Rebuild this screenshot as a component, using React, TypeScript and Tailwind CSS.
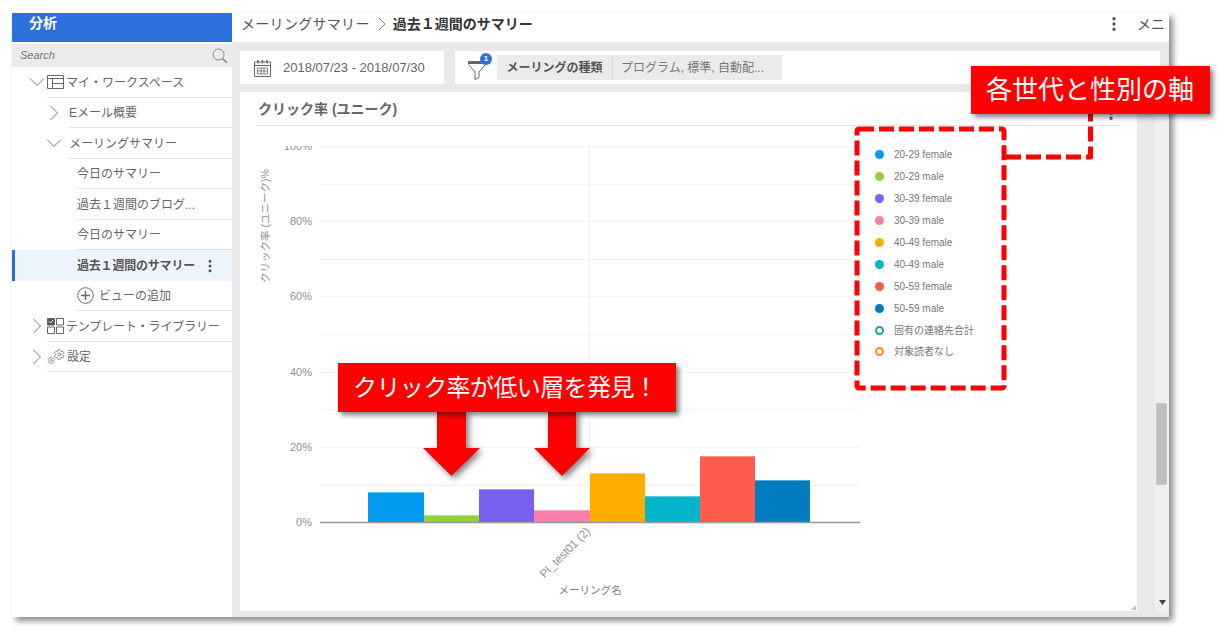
import { MoreVertical, Settings } from 'lucide-react'
import type { ReactNode } from 'react'

const bars = [
  { x: 368, w: 56, top: 492, color: '#009bf0' },
  { x: 424, w: 55, top: 515, color: '#95cf3e' },
  { x: 479, w: 55, top: 489, color: '#7a60ef' },
  { x: 534, w: 56, top: 510, color: '#fb7dab' },
  { x: 590, w: 55, top: 473, color: '#ffae00' },
  { x: 645, w: 55, top: 496, color: '#00b5cc' },
  { x: 700, w: 55, top: 456, color: '#ff5b4d' },
  { x: 755, w: 55, top: 480, color: '#007bbf' },
]

const legend = [
  { label: '20-29 female', color: '#009bf0' },
  { label: '20-29 male', color: '#95cf3e' },
  { label: '30-39 female', color: '#7a60ef' },
  { label: '30-39 male', color: '#fb7dab' },
  { label: '40-49 female', color: '#ffae00' },
  { label: '40-49 male', color: '#00b5cc' },
  { label: '50-59 female', color: '#ff5b4d' },
  { label: '50-59 male', color: '#007bbf' },
  { label: '固有の連絡先合計', color: '#14a88e', ring: true },
  { label: '対象読者なし', color: '#ff8c1a', ring: true },
]

const yTicks = [
  { label: '100%', y: 146 },
  { label: '80%', y: 221 },
  { label: '60%', y: 296 },
  { label: '40%', y: 372 },
  { label: '20%', y: 447 },
  { label: '0%', y: 522 },
]

const gridLines = [146, 184, 221, 259, 296, 334, 372, 409, 447, 485]

function Chevron({ open }: { open: boolean }) {
  return (
    <svg width="16" height="16" viewBox="0 0 16 16" fill="none" stroke="#777" strokeWidth="1">
      {open ? <path d="M1 4.5 L8 11.5 L15 4.5" /> : <path d="M4.5 1 L11.5 8 L4.5 15" />}
    </svg>
  )
}

function LayoutIcon() {
  return (
    <svg width="17" height="14" viewBox="0 0 17 14" fill="none" stroke="#666" strokeWidth="1" className="mb-[2px] shrink-0">
      <path d="M0.5 0.5 H16.5 V13.5 H0.5 Z M0.5 3.5 H16.5 M5.5 3.5 V13.5 M5.5 8.5 H16.5" />
    </svg>
  )
}

function TemplateIcon() {
  return (
    <svg width="17" height="16" viewBox="0 0 17 16" fill="none" stroke="#666" strokeWidth="1" className="mb-[2px] shrink-0">
      <path d="M0.5 0.5 H7.5 V7 H0.5 Z" fill="#555" />
      <path d="M2 3.5 L3.5 5 L6 2" stroke="#fff" />
      <path d="M9.5 0.5 H16.5 V7 H9.5 Z M0.5 9 H7.5 V15.5 H0.5 Z M9.5 9 H16.5 V15.5 H9.5 Z" />
    </svg>
  )
}

function GearIcon() {
  return (
    <span className="mb-[2px] flex w-[18px] shrink-0 items-start text-[#666]">
      <Settings size={9} strokeWidth={1.6} className="mt-[8px]" />
      <Settings size={13} strokeWidth={1.4} className="-ml-[3px]" />
    </span>
  )
}

function TreeRow({ pad, chevron, open, children }: { pad: string; chevron?: string; open?: boolean; children: ReactNode }) {
  return (
    <div className={`flex h-[30.5px] items-stretch ${pad}`}>
      {chevron && (
        <div className={`flex items-center ${chevron}`}>
          <Chevron open={!!open} />
        </div>
      )}
      <div className="flex min-w-0 flex-1 items-center gap-[2px] border-b border-[#e2e2e2] pt-[2px] text-[12px] whitespace-nowrap text-[#666]">
        {children}
      </div>
    </div>
  )
}

function Sidebar() {
  return (
    <aside className="flex w-[220px] shrink-0 flex-col bg-white">
      <div className="flex h-[29px] items-center bg-[#2b70dc] pb-[8px] pl-[17px] text-[14px] font-bold text-white">分析</div>
      <div className="mt-[2px] flex h-[23px] items-center justify-between bg-[#ebebeb] pr-[4px] pl-[8px]">
        <span className="text-[11px] text-[#777] italic">Search</span>
        <svg width="16" height="16" viewBox="0 0 16 16" fill="none" stroke="#888" strokeWidth="1">
          <circle cx="6.5" cy="6.5" r="5.5" />
          <path d="M10.5 10.5 L15 15" strokeWidth="1.6" />
        </svg>
      </div>
      <TreeRow pad="pl-[17px]" chevron="w-[18px]" open>
        <LayoutIcon />
        マイ・ワークスペース
      </TreeRow>
      <TreeRow pad="pl-[34px]" chevron="w-[23px]">
        Eメール概要
      </TreeRow>
      <TreeRow pad="pl-[34px]" chevron="w-[23px]" open>
        メーリングサマリー
      </TreeRow>
      <TreeRow pad="pl-[65px]">今日のサマリー</TreeRow>
      <TreeRow pad="pl-[65px]">過去１週間のブログ...</TreeRow>
      <TreeRow pad="pl-[65px]">今日のサマリー</TreeRow>
      <div className="flex h-[30.5px] items-center border-l-[3px] border-[#2b70dc] bg-[#edf4fd] pt-[1px] pl-[62px] text-[12px] font-bold tracking-[-0.2px] text-[#555]">
        過去１週間のサマリー
        <MoreVertical size={16} strokeWidth={2.5} className="ml-[7px] text-[#555]" />
      </div>
      <TreeRow pad="pl-[65px]">
        <svg width="17" height="17" viewBox="0 0 17 17" fill="none" stroke="#666" strokeWidth="1" className="mr-[3px] mb-[2px] shrink-0">
          <circle cx="8.5" cy="8.5" r="7.8" />
          <path d="M8.5 4 V13 M4 8.5 H13" strokeWidth="1.4" />
        </svg>
        ビューの追加
      </TreeRow>
      <TreeRow pad="pl-[17px]" chevron="w-[18px]">
        <TemplateIcon />
        <span className="tracking-[-0.15px]">テンプレート・ライブラリー</span>
      </TreeRow>
      <TreeRow pad="pl-[17px]" chevron="w-[18px]">
        <GearIcon />
        設定
      </TreeRow>
    </aside>
  )
}

function FilterBar() {
  return (
    <div className="flex h-[33px] gap-[11px] pr-[9px] pl-[8px]">
      <div className="flex w-[204px] items-center bg-white pl-[14px] text-[13px] text-[#666]">
        <svg width="17" height="18" viewBox="0 0 17 18" fill="none" stroke="#666" strokeWidth="1" className="mr-[12px]">
          <path d="M0.5 3 H16.5 V17.5 H0.5 Z M0.5 6.5 H16.5" />
          <path d="M4 1 V4.5 M8.5 1 V4.5 M13 1 V4.5" strokeWidth="1.4" />
          <path d="M3.5 9 H13.5 V15 H3.5 Z M3.5 12 H13.5 M7 9 V15 M10 9 V15" strokeWidth="0.8" />
        </svg>
        2018/07/23 - 2018/07/30
      </div>
      <div className="flex flex-1 items-center bg-white pl-[13px]">
        <div className="relative mr-[11px] h-[25px] w-[18px]">
          <svg width="18" height="19" viewBox="0 0 18 19" fill="none" stroke="#666" strokeWidth="1" className="absolute top-[6px] left-0">
            <path d="M0.5 3.5 L7 11 V18.5 L11 16.5 V11 L17.5 3.5" />
            <path d="M0 1.5 H18" strokeWidth="3" />
          </svg>
          <span className="absolute top-[-2px] left-[12px] flex h-[12px] w-[12px] items-center justify-center rounded-full bg-[#2b70dc] text-[8px] font-bold text-white">
            1
          </span>
        </div>
        <div className="flex h-[25px] items-center bg-[#ebebeb] text-[12px]">
          <span className="flex h-full w-[116px] items-center justify-center border-r border-[#dcdcdc] font-bold text-[#555]">
            メーリングの種類
          </span>
          <span className="flex h-full w-[169px] items-center pl-[8px] text-[#777]">プログラム, 標準, 自動配...</span>
        </div>
      </div>
    </div>
  )
}

function Chart() {
  return (
    <svg width="603" height="465" viewBox="257 146 603 465" className="shrink-0">
      {gridLines.map((y) => (
        <line key={y} x1="320" x2="860" y1={y + 0.5} y2={y + 0.5} stroke="#f3f3f3" />
      ))}
      <line x1="589.5" x2="589.5" y1="146" y2="522" stroke="#efefef" />
      {yTicks.map((t) => (
        <text key={t.label} x="312" y={t.y + 4} textAnchor="end" fontSize="11" fill="#8f8f8f">
          {t.label}
        </text>
      ))}
      <text x="269" y="226" transform="rotate(-90 269 226)" textAnchor="middle" fontSize="10.5" fill="#8f8f8f">
        クリック率 (ユニーク)%
      </text>
      {bars.map((b) => (
        <g key={b.x}>
          <rect x={b.x} y={b.top} width={b.w} height={522 - b.top} fill={b.color} />
          <rect x={b.x} y={b.top} width={b.w} height="1" fill="#fff" opacity="0.35" />
        </g>
      ))}
      <line x1="320" x2="860" y1="522.5" y2="522.5" stroke="#999" strokeWidth="1.5" />
      <text x="591" y="532" transform="rotate(-45 591 532)" textAnchor="end" fontSize="11.5" fill="#8f8f8f">
        PI_test01 (2)
      </text>
      <text x="590" y="594" textAnchor="middle" fontSize="10.5" fill="#808080">
        メーリング名
      </text>
    </svg>
  )
}

function Legend() {
  return (
    <div className="-mt-[2px] ml-[15px] flex flex-col">
      {legend.map((item) => (
        <div key={item.label} className="flex h-[21.9px] items-center text-[10px] whitespace-nowrap text-[#777]">
          {item.ring ? (
            <span className="mr-[10px] h-[9px] w-[9px] rounded-full border-2" style={{ borderColor: item.color }} />
          ) : (
            <span className="mr-[10px] h-[9px] w-[9px] rounded-full" style={{ backgroundColor: item.color }} />
          )}
          {item.label}
        </div>
      ))}
    </div>
  )
}

function Main() {
  return (
    <main className="flex min-w-0 flex-1 flex-col bg-[#e9e9e9]">
      <header className="flex h-[29px] shrink-0 items-center bg-white pb-[7px] pl-[9px] text-[14px] text-[#555]">
        <span className="tracking-[0.3px]">メーリングサマリー</span>
        <svg width="8" height="14" viewBox="0 0 8 14" fill="none" stroke="#777" strokeWidth="1" className="mr-[7px] ml-[8px]">
          <path d="M1 1 L7 7 L1 13" />
        </svg>
        <span className="font-bold text-[#333]">過去１週間のサマリー</span>
        <MoreVertical size={18} strokeWidth={2.5} className="mr-[14px] ml-auto text-[#555]" />
        <span className="w-[32px] overflow-hidden text-[14px] whitespace-nowrap text-[#555]">メニ</span>
      </header>
      <div className="flex-1 pt-[9px]">
        <FilterBar />
        <div className="mt-[8px] flex h-[525px] items-start">
          <section className="relative ml-[8px] flex h-[519px] w-[897px] shrink-0 flex-col bg-white px-[17px]">
            <div className="flex h-[34px] shrink-0 items-center justify-between border-b border-[#e2e2e2] pt-[1px]">
              <span className="pl-[1px] text-[14px] font-bold text-[#666]">クリック率 (ユニーク)</span>
              <MoreVertical size={18} strokeWidth={2.5} className="mt-[8px] text-[#555]" />
            </div>
            <div className="mt-[20px] flex flex-1">
              <Chart />
              <Legend />
            </div>
            <svg width="5" height="5" viewBox="0 0 5 5" className="absolute right-[1px] bottom-[1px]">
              <path d="M5 0 V5 H0 Z" fill="#c4c4c4" />
            </svg>
          </section>
          <div className="ml-[18px] flex h-[519px] w-[14px] flex-col bg-[#f0f0f0]">
            <div className="mt-[311px] ml-[1px] h-[82px] w-[11px] border border-[#c8c8c8] bg-[#bdbdbd]" />
            <svg width="7" height="5" viewBox="0 0 7 5" className="mt-auto mb-[6px] self-center">
              <path d="M0 0 H7 L3.5 5 Z" fill="#444" />
            </svg>
          </div>
        </div>
      </div>
    </main>
  )
}

function Annotations() {
  return (
    <>
      <svg width="1226" height="638" viewBox="0 0 1226 638" className="pointer-events-none absolute top-0 left-0">
        <g fill="none" stroke="#ff0000" strokeWidth="5" strokeDasharray="15 5" strokeLinejoin="round">
          <rect x="857" y="129" width="147" height="259" rx="2" />
          <path d="M1006 157 H1090.5 V114" />
        </g>
      </svg>
      <svg width="1226" height="638" viewBox="0 0 1226 638" className="pointer-events-none absolute top-0 left-0 drop-shadow-[3px_3px_3px_rgba(0,0,0,0.5)]">
        <path d="M437 410 H466 V448 H480 L451.5 476 L423 448 H437 Z" fill="#ff0000" />
        <path d="M548 410 H576 V448 H590 L562 476 L534 448 H548 Z" fill="#ff0000" />
      </svg>
      <div className="absolute top-[363px] left-[338px] flex h-[49px] w-[338px] items-center bg-[#ff0000] pl-[15px] text-[24px] tracking-[-0.6px] whitespace-nowrap text-white shadow-[3px_3px_5px_rgba(0,0,0,0.5)]">
        クリック率が低い層を発見！
      </div>
      <div className="absolute top-[66px] left-[971px] flex h-[48px] w-[239px] items-center bg-[#ff0000] pl-[15px] text-[26px] whitespace-nowrap text-white shadow-[3px_3px_5px_rgba(0,0,0,0.5)]">
        各世代と性別の軸
      </div>
    </>
  )
}

export default function App() {
  return (
    <div className="relative h-[638px] w-[1226px] overflow-hidden bg-white pt-[13px] pl-[12px] font-['Liberation_Sans','Noto_Sans_CJK_JP',sans-serif]">
      <div className="flex h-[604px] w-[1157px] shadow-[4px_4px_6px_rgba(0,0,0,0.45)]">
        <Sidebar />
        <Main />
      </div>
      <Annotations />
    </div>
  )
}
